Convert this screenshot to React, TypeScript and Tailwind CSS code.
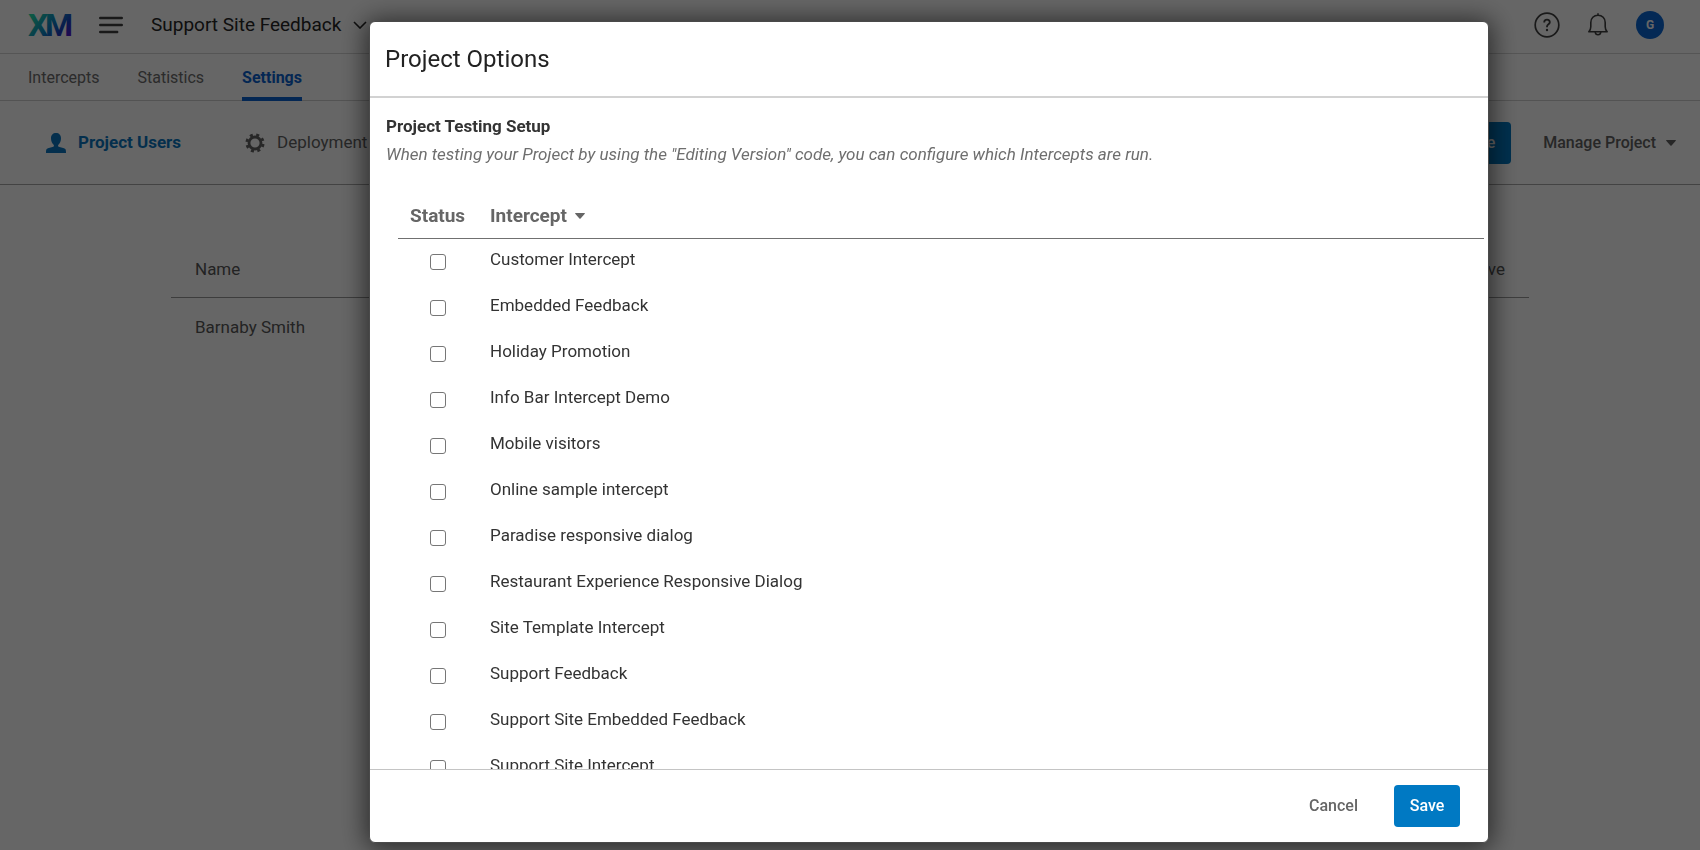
import React from "react";

const intercepts = [
  "Customer Intercept",
  "Embedded Feedback",
  "Holiday Promotion",
  "Info Bar Intercept Demo",
  "Mobile visitors",
  "Online sample intercept",
  "Paradise responsive dialog",
  "Restaurant Experience Responsive Dialog",
  "Site Template Intercept",
  "Support Feedback",
  "Support Site Embedded Feedback",
  "Support Site Intercept",
];

function Logo() {
  return (
    <svg width="46" height="40" viewBox="0 0 46 40" role="img" aria-label="XM">
      <defs>
        <linearGradient id="xm" gradientUnits="userSpaceOnUse" x1="8" y1="6" x2="40" y2="34">
          <stop offset="0" stopColor="#21dbaa" />
          <stop offset="0.5" stopColor="#0b7fc4" />
          <stop offset="0.75" stopColor="#1b3fbf" />
          <stop offset="1" stopColor="#5a10d0" />
        </linearGradient>
      </defs>
      <g fill="url(#xm)" fontFamily="Roboto, sans-serif" fontWeight="700" fontSize="32">
        <text x="0" y="31">X</text>
        <text x="17" y="31">M</text>
      </g>
    </svg>
  );
}

function Caret() {
  return (
    <svg width="10" height="6" viewBox="0 0 10 6" aria-hidden="true">
      <path d="M0.6 0h8.8a.5.5 0 0 1 .4.8L5.6 5.4a.8.8 0 0 1-1.2 0L.2.8A.5.5 0 0 1 .6 0z" fill="currentColor" />
    </svg>
  );
}

function UserIcon() {
  return (
    <svg width="20" height="20" viewBox="0 0 20 20" aria-hidden="true">
      <path
        d="M10 0C6.900 0 5 2 5 5.200c0 2.600 1 5 2.600 6.600.5.500.5 1.600-.2 1.900-2.200.8-5.400 1.200-6.700 2.300C.2 16.500 0 17.400 0 20h20c0-2.600-.2-3.500-.7-4-1.300-1.100-4.500-1.500-6.700-2.300-.7-.3-.7-1.400-.2-1.900C14 10.200 15 7.800 15 5.200 15 2 13.100 0 10 0z"
        fill="currentColor"
      />
    </svg>
  );
}

function GearIcon() {
  return (
    <svg width="20" height="20" viewBox="0 0 20 20" fill="none" stroke="currentColor" aria-hidden="true">
      <circle cx="10" cy="10" r="6" strokeWidth="2.800" />
      <circle cx="10" cy="10" r="8.200" strokeWidth="2.800" strokeDasharray="3 3.440" strokeDashoffset="-1" />
    </svg>
  );
}

function Background() {
  return (
    <div className="min-h-screen bg-white">
      <header className="flex h-[54px] items-center border-b border-[#d5d5d5] pr-9 pb-1 pl-7">
        <Logo />
        <button type="button" aria-label="Menu" className="ml-[25px] text-[#404040]">
          <svg width="24" height="18" viewBox="0 0 24 18" fill="none" stroke="currentColor" strokeWidth="2.400" strokeLinecap="round">
            <path d="M1.200 2h21.600M1.200 9h21.600M1.200 16h17" />
          </svg>
        </button>
        <button type="button" className="ml-7 flex items-center gap-3 text-[19px] leading-6 text-[#262626]">
          Support Site Feedback
          <svg width="14" height="8" viewBox="0 0 14 8" fill="none" stroke="currentColor" strokeWidth="1.600" aria-hidden="true">
            <path d="M1 1l6 6 6-6" />
          </svg>
        </button>
        <div className="ml-auto flex items-center gap-[27px] text-[#404040]">
          <button type="button" aria-label="Help">
            <svg width="26" height="26" viewBox="0 0 26 26" fill="none" stroke="currentColor" strokeWidth="1.700">
              <circle cx="13" cy="13" r="11.800" />
              <path d="M10.200 10.400c0-1.800 1.200-2.800 2.800-2.800s2.800 1 2.800 2.600c0 2-2.800 2.200-2.800 4.400v.6" strokeWidth="1.800" />
              <circle cx="13" cy="18" r="1.200" fill="currentColor" stroke="none" />
            </svg>
          </button>
          <button type="button" aria-label="Notifications">
            <svg width="22" height="24" viewBox="0 0 22 24" fill="none" stroke="currentColor" strokeWidth="1.600">
              <path d="M11 .2v2M1.800 18.800h18.400c-1.400-1.300-2-3-2-5V9.400c0-4.200-3-7.200-7.200-7.200S3.800 5.200 3.800 9.400v4.400c0 2-.6 3.700-2 5z" strokeLinejoin="round" />
              <path d="M8.200 19c.2 1.900 1.400 2.800 2.800 2.800s2.600-.9 2.800-2.800" />
            </svg>
          </button>
          <button type="button" className="size-7 rounded-full bg-[#0b68d4] text-[12px] font-bold text-white">
            G
          </button>
        </div>
      </header>
      <nav className="flex h-[47px] gap-[38px] border-b border-[#d0d0d0] pl-7 text-[16px] text-[#6c6c6c]">
        <a href="#intercepts" className="flex items-center pt-[2px]">Intercepts</a>
        <a href="#statistics" className="flex items-center pt-[2px]">Statistics</a>
        <a href="#settings" className="-mb-px flex items-center border-b-4 border-[#0b62d0] pt-[5px] font-bold text-[#0b62d0]">
          Settings
        </a>
      </nav>
      <div className="flex h-[84px] items-center border-b border-[#a8a8a8] pr-6 pl-[46px] text-[17px] text-[#626262]">
        <a href="#users" className="flex items-center gap-3 font-bold text-[#0b76c0]">
          <UserIcon />
          Project Users
        </a>
        <a href="#deployment" className="ml-16 flex items-center gap-3">
          <GearIcon />
          Deployment
        </a>
        <button type="button" className="ml-auto h-[42px] rounded-[4px] bg-[#0079c3] px-4 text-[16px] font-medium text-white">
          Save
        </button>
        <button type="button" className="ml-8 flex items-center gap-[10px] text-[16px] font-medium">
          Manage Project
          <Caret />
        </button>
      </div>
      <div className="px-[171px] pt-14">
        <table className="w-full text-left text-[17px] leading-6 text-[#585858]">
          <thead>
            <tr className="border-b border-[#9a9a9a]">
              <th className="h-14 px-6 font-normal">Name</th>
              <th className="px-6 text-right font-normal">Active</th>
            </tr>
          </thead>
          <tbody>
            <tr>
              <td className="h-[60px] px-6">Barnaby Smith</td>
              <td />
            </tr>
          </tbody>
        </table>
      </div>
    </div>
  );
}

function ProjectOptions() {
  return (
    <section
      role="dialog"
      aria-modal="true"
      aria-labelledby="dialog-title"
      className="flex h-full w-full max-w-[1120px] flex-col overflow-hidden rounded-[6px] border border-[#4a4a4a] bg-white shadow-[0_2px_26px_3px_rgba(0,0,0,0.600)]"
    >
      <header className="flex h-[76px] shrink-0 items-center border-b-2 border-[#d2d2d2] px-[15px]">
        <h1 id="dialog-title" className="text-[24px] leading-8 text-[#222]">Project Options</h1>
      </header>
      <div className="min-h-0 flex-1 overflow-hidden pt-4 pl-4">
        <h2 className="text-[17px] leading-6 font-bold text-[#333]">Project Testing Setup</h2>
        <p className="mt-1 text-[17px] leading-6 text-[#6e6e6e] italic">
          When testing your Project by using the "Editing Version" code, you can configure which Intercepts are run.
        </p>
        <div className="mt-6 pr-1 pl-3">
          <table className="w-full text-left">
            <thead>
              <tr className="border-b border-[#707070] text-[19px] text-[#666]">
                <th className="h-12 w-[92px] pt-[5px] pl-3 font-bold">Status</th>
                <th className="pt-[5px] font-bold">
                  <button type="button" className="flex items-center gap-2 font-bold">
                    Intercept
                    <Caret />
                  </button>
                </th>
              </tr>
            </thead>
            <tbody>
              {intercepts.map((name, i) => (
                <tr key={name} className="h-[46px] text-[17px] leading-6 text-[#333]">
                  <td className="pt-[2px] pl-8">
                    <input
                      id={`intercept-${i}`}
                      type="checkbox"
                      className="block size-4 appearance-none rounded-[3px] border border-[#767676] bg-white checked:bg-[#0079c3]"
                    />
                  </td>
                  <td className="pb-1">
                    <label htmlFor={`intercept-${i}`}>{name}</label>
                  </td>
                </tr>
              ))}
            </tbody>
          </table>
        </div>
      </div>
      <footer className="flex h-[73px] shrink-0 items-center justify-end gap-9 border-t border-[#c4c4c4] pr-7 text-[16px] font-medium">
        <button type="button" className="text-[#666]">Cancel</button>
        <button type="button" className="h-[42px] w-[66px] rounded-[4px] bg-[#0079c3] text-white">Save</button>
      </footer>
    </section>
  );
}

export default function App() {
  return (
    <div className="font-[Roboto,sans-serif]">
      <Background />
      <div className="fixed inset-0 flex justify-center bg-black/60 pt-[21px] pb-[7px] pl-[158px]">
        <ProjectOptions />
      </div>
    </div>
  );
}
